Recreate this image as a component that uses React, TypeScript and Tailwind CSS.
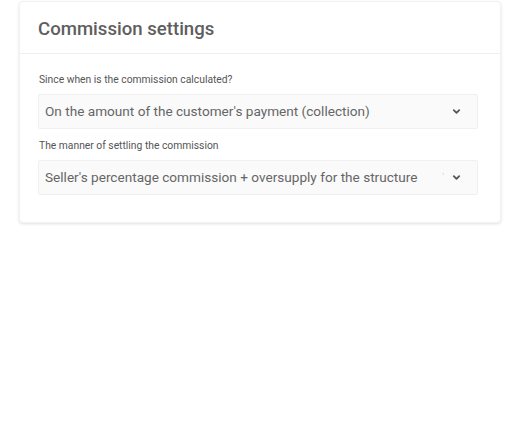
import React from 'react';

const Chevron = () => (
  <svg className="w-[9px] h-[9px] text-[#555]" viewBox="0 0 10 10" fill="none" stroke="currentColor" strokeWidth="2">
    <path d="M2 3.5l3 3 3-3" strokeLinecap="round" strokeLinejoin="round" />
  </svg>
);

interface FieldProps {
  label: string;
  value: string;
  tail?: boolean;
}

const Field: React.FC<FieldProps> = ({ label, value, tail }) => (
  <div className="flex flex-col">
    <label className="text-[10.3px] leading-[14px] text-[#555] pl-px">{label}</label>
    <div className="mt-[7px] h-[35px] flex items-center bg-[#fafafa] border border-[#f0f0f0] rounded-[2px] pl-[6px] pr-[16px]">
      <span className="flex-1 text-[13.6px] text-[#666] whitespace-nowrap overflow-hidden">{value}</span>
      {tail && <span className="text-[8px] text-[#bbb] mr-[8px] -mt-[4px]">'</span>}
      <Chevron />
    </div>
  </div>
);

export default function App() {
  return (
    <div className="min-h-screen bg-white pt-px" style={{ fontFamily: 'Roboto, "Liberation Sans", sans-serif' }}>
      <div className="ml-[19px] w-[482px] bg-white rounded-[4px] border border-[#f2f2f2] shadow-[0_1px_3px_rgba(0,0,0,0.12)]">
        <div className="h-[52px] flex items-center pt-[5px] px-[18px] border-b border-[#eeeeee]">
          <h1 className="text-[18.6px] font-medium text-[#5e5e5e]">Commission settings</h1>
        </div>
        <div className="pl-[18px] pr-[22px] pt-[19px] pb-[27px] flex flex-col gap-[10px]">
          <Field label="Since when is the commission calculated?" value="On the amount of the customer's payment (collection)" />
          <Field label="The manner of settling the commission" value="Seller's percentage commission + oversupply for the structure" tail />
        </div>
      </div>
    </div>
  );
}
